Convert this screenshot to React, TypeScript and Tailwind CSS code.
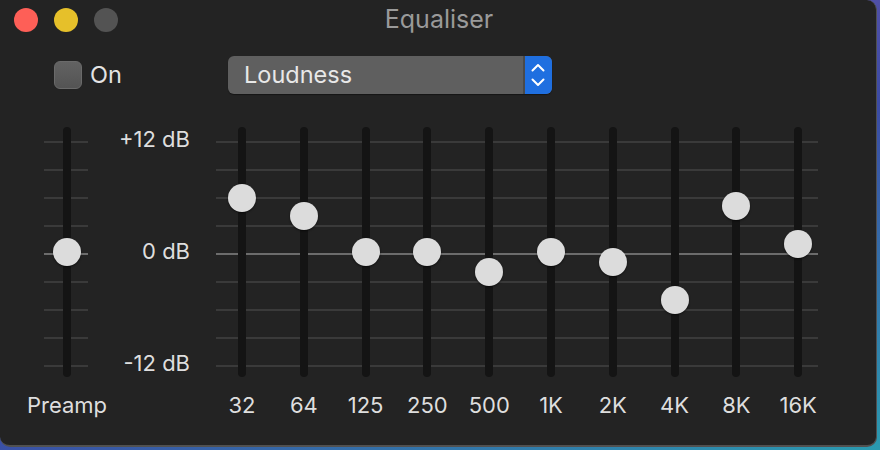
import React from "react";

const bands: { label: string; y: number }[] = [
  { label: "32", y: 198 },
  { label: "64", y: 216 },
  { label: "125", y: 252 },
  { label: "250", y: 252 },
  { label: "500", y: 272 },
  { label: "1K", y: 252 },
  { label: "2K", y: 262 },
  { label: "4K", y: 300 },
  { label: "8K", y: 206 },
  { label: "16K", y: 244 },
];

const TRACK_TOP = 127;

function Slider({ label, y }: { label: string; y: number }) {
  return (
    <div className="flex w-[8px] flex-col items-center">
      <div className="relative h-[250px] w-[8px] rounded-full bg-[#141414]">
        <div
          className="absolute left-1/2 h-[28px] w-[28px] -translate-x-1/2 rounded-full bg-[#dcdcdc] shadow-[0_1px_2px_rgba(0,0,0,0.55)]"
          style={{ top: y - TRACK_TOP - 14 }}
        />
      </div>
      <div className="mt-[16px] whitespace-nowrap text-center text-[22px] leading-[24px] text-[#dedede]">
        {label}
      </div>
    </div>
  );
}

function GridLines() {
  const lines = [0, 1, 2, 3, 4, 5, 6, 7, 8];
  return (
    <div className="absolute inset-x-0 top-[14px] flex flex-col gap-[26px]">
      {lines.map((i) => (
        <div key={i} className={i === 4 ? "h-[2px] bg-[#6c6c6c]" : "h-[2px] bg-[#3a3a3a]"} />
      ))}
    </div>
  );
}

export default function App() {
  return (
    <div
      className="h-[450px] w-[880px] overflow-hidden bg-[linear-gradient(160deg,#8e5fb0_0%,#3b4ba5_55%,#2a9ab0_100%)]"
      style={{ fontFamily: "Inter, 'Noto Sans', sans-serif" }}
    >
      <div className="h-[447px] w-[877px] rounded-[10px] rounded-tl-none border-b-2 border-r border-[#505050] bg-[#232323]">
        {/* Title bar */}
        <div className="relative flex h-[40px] items-center pl-[14px]">
          <div className="flex gap-[16px]">
            <div className="h-[24px] w-[24px] rounded-full bg-[#fe5f57]" />
            <div className="h-[24px] w-[24px] rounded-full bg-[#e6c02a]" />
            <div className="h-[24px] w-[24px] rounded-full bg-[#535353]" />
          </div>
          <div className="absolute inset-x-0 top-0 flex h-[40px] items-center justify-center pl-[2px] text-[25px] text-[#9a9a9a]">
            Equaliser
          </div>
        </div>

        {/* Controls */}
        <div className="mt-[16px] flex h-[38px] items-center pl-[54px]">
          <div className="flex w-[174px] items-center gap-[8px]">
            <div className="h-[28px] w-[28px] rounded-[6px] border border-[#6a6a6a] bg-[linear-gradient(#626262,#545454)]" />
            <span className="text-[23.5px] text-[#e4e4e4]">On</span>
          </div>
          <div className="flex h-[38px] w-[324px] items-stretch overflow-hidden rounded-[6px] bg-[#5f5f5f] shadow-[0_1px_1px_rgba(0,0,0,0.4)]">
            <div className="flex flex-1 items-center pl-[16px] text-[23.5px] text-[#e8e8e8]">Loudness</div>
            <div className="w-[2px] bg-[#4a4a4a]" />
            <div className="flex w-[27px] flex-col items-center justify-center gap-[6px] bg-[#1f6fe0] pr-[2px]">
              <svg width="14" height="9" viewBox="0 0 14 9" fill="none">
                <path d="M1.5 7.5 L7 2 L12.5 7.5" stroke="#fff" strokeWidth="2" strokeLinecap="round" strokeLinejoin="round" />
              </svg>
              <svg width="14" height="9" viewBox="0 0 14 9" fill="none">
                <path d="M1.5 1.5 L7 7 L12.5 1.5" stroke="#fff" strokeWidth="2" strokeLinecap="round" strokeLinejoin="round" />
              </svg>
            </div>
          </div>
        </div>

        {/* Sliders */}
        <div className="mt-[33px] flex items-start pl-[44px]">
          <div className="relative flex w-[44px] pl-[19px]">
            <GridLines />
            <div className="relative">
              <Slider label="Preamp" y={252} />
            </div>
          </div>
          <div className="flex h-[248px] w-[102px] flex-col justify-between text-right text-[22px] leading-[24px] text-[#dedede]">
            <div>+12 dB</div>
            <div>0 dB</div>
            <div>-12 dB</div>
          </div>
          <div className="relative ml-[26px] w-[602px]">
            <GridLines />
            <div className="relative flex gap-[53.8px] pl-[22px]">
              {bands.map((b) => (
                <Slider key={b.label} label={b.label} y={b.y} />
              ))}
            </div>
          </div>
        </div>
      </div>
    </div>
  );
}
